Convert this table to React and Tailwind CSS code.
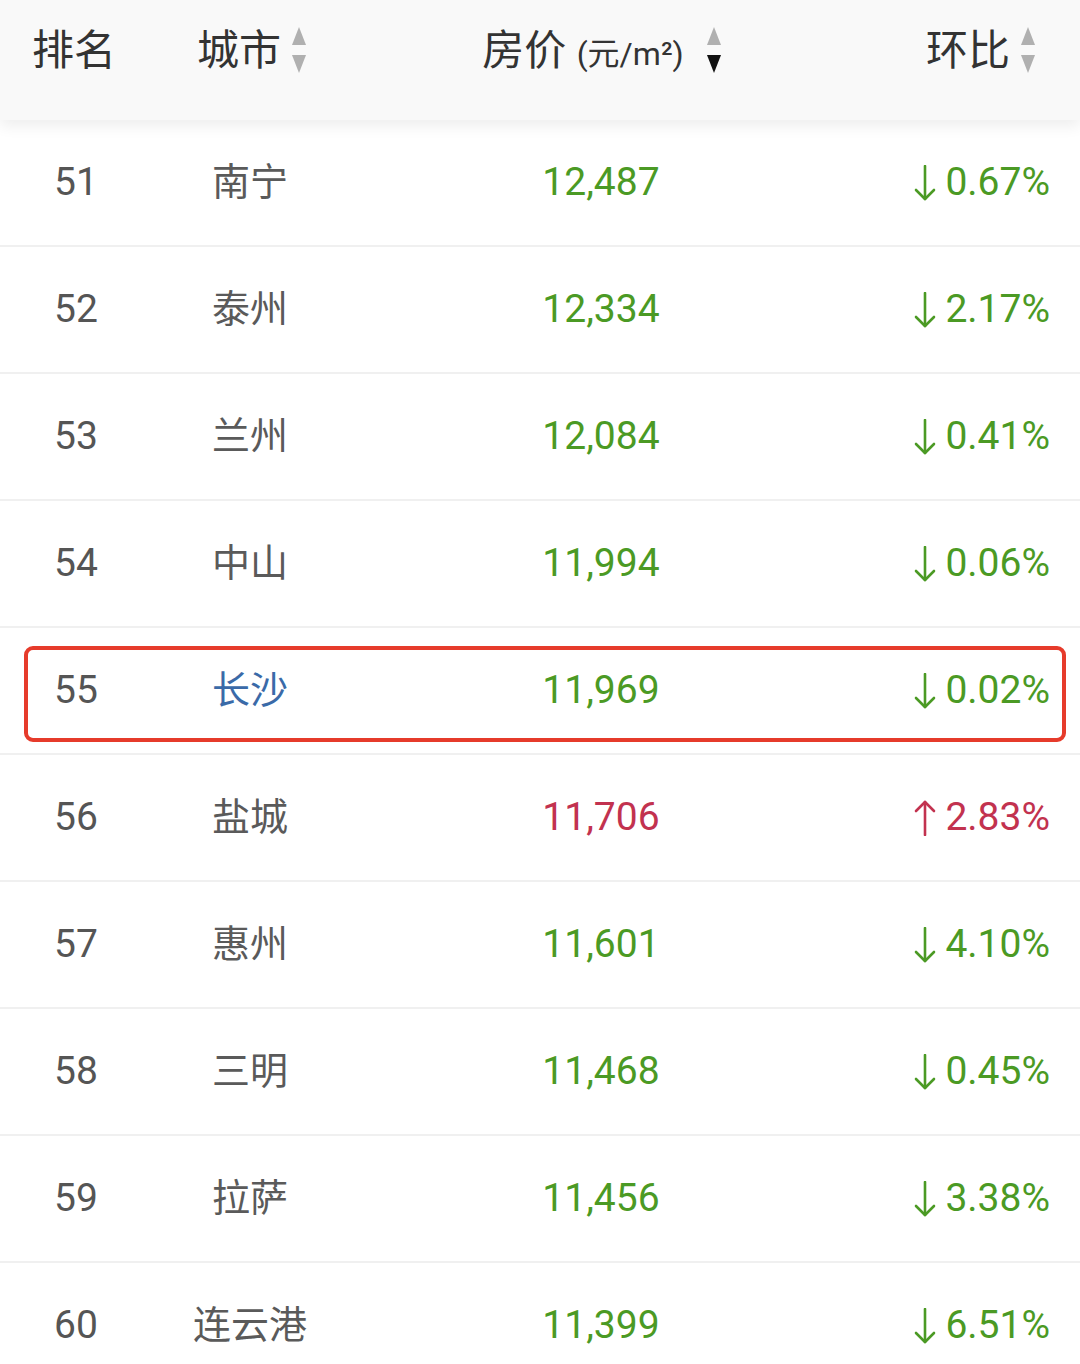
import React from 'react'

const rows = [
  { rank: 51, city: '南宁', price: '12,487', change: '0.67%', up: false },
  { rank: 52, city: '泰州', price: '12,334', change: '2.17%', up: false },
  { rank: 53, city: '兰州', price: '12,084', change: '0.41%', up: false },
  { rank: 54, city: '中山', price: '11,994', change: '0.06%', up: false },
  { rank: 55, city: '长沙', price: '11,969', change: '0.02%', up: false, hl: true },
  { rank: 56, city: '盐城', price: '11,706', change: '2.83%', up: true },
  { rank: 57, city: '惠州', price: '11,601', change: '4.10%', up: false },
  { rank: 58, city: '三明', price: '11,468', change: '0.45%', up: false },
  { rank: 59, city: '拉萨', price: '11,456', change: '3.38%', up: false },
  { rank: 60, city: '连云港', price: '11,399', change: '6.51%', up: false },
]

// two stacked triangles, the active one dark
function SortIcon({ active }) {
  return (
    <svg width="16" height="50" viewBox="0 0 16 50" className="shrink-0">
      <path d="M8 2 L15 20 L1 20 Z" fill="#b0b0b0" />
      <path d="M1 30 L15 30 L8 48 Z" fill={active === 'down' ? '#111' : '#b0b0b0'} />
    </svg>
  )
}

function Arrow({ up }) {
  return (
    <svg width="24" height="36" viewBox="0 0 24 36" className="shrink-0 mr-[8px]">
      {up ? (
        <g stroke="currentColor" strokeWidth="2.6" fill="none" strokeLinecap="round" strokeLinejoin="round">
          <path d="M12 2 L12 35" />
          <path d="M3 11 L12 2 L21 11" />
        </g>
      ) : (
        <g stroke="currentColor" strokeWidth="2.6" fill="none" strokeLinecap="round" strokeLinejoin="round">
          <path d="M12 1 L12 34" />
          <path d="M3 25 L12 34 L21 25" />
        </g>
      )}
    </svg>
  )
}

export default function App() {
  return (
    <div
      className="w-[1080px] h-[1364px] overflow-hidden bg-white relative"
      style={{ fontFamily: 'Roboto, "Noto Sans CJK SC", sans-serif' }}
    >
      {/* header */}
      <div className="relative z-10 h-[120px] pb-[20px] bg-[#f9f9f9] shadow-[0_6px_14px_rgba(0,0,0,0.07)] flex items-center text-[#333] text-[42px]">
        <div className="w-[150px] pl-[32px]">排名</div>
        <div className="w-[200px] flex items-center justify-center gap-[10px] pl-[4px]">
          <span>城市</span>
          <SortIcon />
        </div>
        <div className="w-[502px] flex items-center justify-center gap-[22px] pl-[2px]">
          <span>
            房价 <span className="text-[32px]">(元/m²)</span>
          </span>
          <SortIcon active="down" />
        </div>
        <div className="flex-1 flex items-center justify-end gap-[10px] pr-[44px]">
          <span>环比</span>
          <SortIcon />
        </div>
      </div>

      {/* rows */}
      <div className="flex flex-col">
        {rows.map((r) => {
          const color = r.up ? 'text-[#c2324f]' : 'text-[#4b9a24]'
          return (
            <div
              key={r.rank}
              className="h-[127px] shrink-0 flex items-center border-b-2 border-[#f0f0f0] text-[39px]"
            >
              <div className="w-[150px] pl-[54px] text-[#555]">{r.rank}</div>
              <div
                className={`w-[200px] text-center text-[38px] ${r.hl ? 'text-[#3a6aa8]' : 'text-[#5a5a5a]'}`}
              >
                {r.city}
              </div>
              <div className={`w-[502px] text-center ${color}`}>{r.price}</div>
              <div className={`flex-1 flex items-center justify-end pr-[30px] ${color}`}>
                <Arrow up={r.up} />
                <span>{r.change}</span>
              </div>
            </div>
          )
        })}
      </div>

      {/* highlight annotation */}
      <div className="absolute left-[24px] top-[646px] w-[1042px] h-[96px] border-[4px] border-[#e63b2b] rounded-[9px] pointer-events-none" />
    </div>
  )
}
